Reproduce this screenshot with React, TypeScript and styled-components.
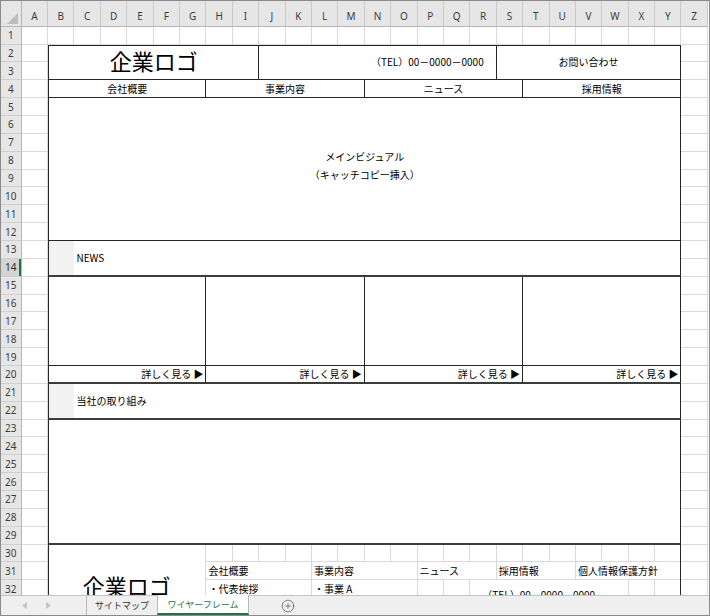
import React from 'react';
import styled, { createGlobalStyle } from 'styled-components';
import { CirclePlus } from 'lucide-react';

const COLW = 26.4;
const ROWH = 17.86;
const COLS = 'ABCDEFGHIJKLMNOPQRSTUVWXYZ'.split('');
const ROW_COUNT = 33;
const ACTIVE_ROW = 14;

const GlobalStyle = createGlobalStyle`
  html, body { margin: 0; padding: 0; background: #fff; }
  body { font-family: "Noto Sans CJK JP", "Noto Sans", sans-serif; }
  * { box-sizing: border-box; }
`;

const Window = styled.div`
  width: 710px;
  height: 616px;
  border: 1px solid #8a8a8a;
  display: flex;
  flex-direction: column;
  overflow: hidden;
  background: #fff;
`;

const Viewport = styled.div`
  flex: 1;
  min-height: 0;
  overflow: hidden;
  display: grid;
`;

const Layer = styled.div`
  grid-area: 1 / 1;
  display: grid;
  grid-template-columns: 20.7px repeat(26, ${COLW}px);
  grid-template-rows: 25.7px repeat(${ROW_COUNT}, ${ROWH}px);
  align-self: start;
`;

const ContentLayer = styled(Layer)`
  pointer-events: none;
`;

const Corner = styled.div`
  background: #e6e6e6;
  border-right: 1px solid #b4b4b4;
  border-bottom: 1px solid #b4b4b4;
  display: flex;
  align-items: flex-end;
  justify-content: flex-end;
  padding: 0 3px 2px 0;
`;

const ColHeader = styled.div`
  background: #e6e6e6;
  border-right: 1px solid #cacaca;
  border-bottom: 1px solid #b4b4b4;
  display: flex;
  align-items: center;
  justify-content: center;
  padding-top: 5px;
  font-family: "Noto Sans", "DejaVu Sans", sans-serif;
  font-size: 10px;
  color: #3c3c3c;
`;

const RowHeader = styled.div<{ $active?: boolean }>`
  background: ${(p) => (p.$active ? '#d4d4d4' : '#e6e6e6')};
  border-right: 1px solid #b4b4b4;
  border-bottom: 1px solid #cfcfcf;
  box-shadow: ${(p) => (p.$active ? 'inset -2px 0 0 #217346' : 'none')};
  display: flex;
  align-items: center;
  justify-content: center;
  font-family: "Noto Sans", "DejaVu Sans", sans-serif;
  font-size: 10px;
  color: ${(p) => (p.$active ? '#2b2b2b' : '#3c3c3c')};
`;

const GridCell = styled.div`
  border-right: 1px solid #d9d9d9;
  border-bottom: 1px solid #d9d9d9;
`;

type Edge = 0 | 1 | 2 | 'g';
const edge = (e: Edge = 0) =>
  e === 'g' ? '1px solid #d9d9d9' : e === 0 ? 'none' : `${e}px solid ${e === 2 ? '#3c3c3c' : '#262626'}`;

const cols = (a: string, b: string) => `${COLS.indexOf(a) + 2} / ${COLS.indexOf(b) + 3}`;
const rows = (a: number, b: number) => `${a + 1} / ${b + 2}`;

const Merged = styled.div<{
  $col: string;
  $row: string;
  $t?: Edge;
  $l?: Edge;
  $r?: Edge;
  $b?: Edge;
  $fill?: string;
  $justify?: string;
}>`
  grid-column: ${(p) => p.$col};
  grid-row: ${(p) => p.$row};
  background: ${(p) => p.$fill ?? '#fff'};
  border-top: ${(p) => edge(p.$t)};
  border-left: ${(p) => edge(p.$l)};
  border-right: ${(p) => edge(p.$r)};
  border-bottom: ${(p) => edge(p.$b)};
  display: flex;
  align-items: center;
  justify-content: ${(p) => p.$justify ?? 'center'};
  min-width: 0;
  overflow: hidden;
  white-space: nowrap;
  font-size: 10px;
  line-height: 12px;
  color: #000;
`;

const LogoCell = styled(Merged)`
  font-size: 22px;
  line-height: 26px;
  padding-bottom: 5px;
`;

const TelCell = styled(Merged)`
  padding-right: 12px;
`;

const VisualCell = styled(Merged)`
  flex-direction: column;
  line-height: 18px;
  padding-bottom: 6px;
`;

const SectionLabel = styled(Merged)`
  padding-left: 2px;
`;

const MoreCell = styled(Merged)`
  padding-right: 2px;
`;

const FooterLogo = styled(Merged)`
  align-items: flex-start;
  font-size: 22px;
  line-height: 26px;
  padding-top: 27px;
`;

const FooterLink = styled(Merged)`
  padding-left: 2px;
`;

const FooterTel = styled(Merged)`
  align-items: flex-start;
  padding-left: 12px;
  padding-top: 9px;
`;

const Outline = styled(Merged)`
  background: transparent;
`;

const TabBar = styled.div`
  height: 20px;
  flex: none;
  display: flex;
  background: #efefef;
  font-size: 9px;
`;

const NavArea = styled.div`
  width: 85px;
  border-top: 1px solid #c3c3c3;
  display: flex;
  align-items: center;
  padding-left: 21px;
  gap: 19px;
`;

const Tab = styled.div<{ $w: number }>`
  width: ${(p) => p.$w}px;
  border-top: 1px solid #c3c3c3;
  border-left: 1px solid #b9b9b9;
  display: flex;
  align-items: center;
  justify-content: center;
  color: #333;
`;

const ActiveTab = styled.div<{ $w: number }>`
  width: ${(p) => p.$w}px;
  background: #fff;
  border-left: 1px solid #b9b9b9;
  border-right: 1px solid #b9b9b9;
  border-bottom: 2px solid #217346;
  display: flex;
  align-items: center;
  justify-content: center;
  padding-top: 1px;
  color: #217346;
`;

const AddArea = styled.div`
  flex: 1;
  border-top: 1px solid #c3c3c3;
  display: flex;
  align-items: center;
  padding-left: 32px;
  color: #6e6e6e;
`;

const navItems: [string, string, string][] = [
  ['会社概要', 'B', 'G'],
  ['事業内容', 'H', 'M'],
  ['ニュース', 'N', 'S'],
  ['採用情報', 'T', 'Y'],
];

const Arrow = ({ dir }: { dir: 'l' | 'r' }) => (
  <svg width="5" height="7" viewBox="0 0 5 7">
    <polygon points={dir === 'l' ? '5,0 0,3.5 5,7' : '0,0 5,3.5 0,7'} fill="#c4c4c4" />
  </svg>
);

export default function App() {
  const rowNums = Array.from({ length: ROW_COUNT }, (_, i) => i + 1);
  return (
    <>
      <GlobalStyle />
      <Window>
        <Viewport>
          <Layer>
            <Corner>
              <svg width="11" height="11" viewBox="0 0 11 11">
                <polygon points="11,0 11,11 0,11" fill="#bdbdbd" />
              </svg>
            </Corner>
            {COLS.map((c) => (
              <ColHeader key={c}>{c}</ColHeader>
            ))}
            {rowNums.map((r) => (
              <React.Fragment key={r}>
                <RowHeader $active={r === ACTIVE_ROW}>{r}</RowHeader>
                {COLS.map((c) => (
                  <GridCell key={c} />
                ))}
              </React.Fragment>
            ))}
          </Layer>

          <ContentLayer>
            {/* header */}
            <LogoCell $col={cols('B', 'I')} $row={rows(2, 3)} $t={1} $l={1} $r={1} $b={1}>
              企業ロゴ
            </LogoCell>
            <TelCell $col={cols('J', 'R')} $row={rows(2, 3)} $t={1} $r={1} $b={1} $justify="flex-end">
              （TEL）00－0000－0000
            </TelCell>
            <Merged $col={cols('S', 'Y')} $row={rows(2, 3)} $t={1} $r={1} $b={1}>
              お問い合わせ
            </Merged>
            {navItems.map(([label, a, b], i) => (
              <Merged key={label} $col={cols(a, b)} $row={rows(4, 4)} $l={i === 0 ? 1 : 0} $r={1} $b={1}>
                {label}
              </Merged>
            ))}

            {/* main visual */}
            <VisualCell $col={cols('B', 'Y')} $row={rows(5, 12)} $l={1} $r={1} $b={1}>
              <span>メインビジュアル</span>
              <span>（キャッチコピー挿入）</span>
            </VisualCell>

            {/* news */}
            <Merged $col={cols('B', 'B')} $row={rows(13, 14)} $l={1} $b={2} $fill="#f2f2f2" />
            <SectionLabel $col={cols('C', 'Y')} $row={rows(13, 14)} $r={1} $b={2} $justify="flex-start">
              NEWS
            </SectionLabel>
            {navItems.map(([label, a, b], i) => (
              <Merged key={'n' + label} $col={cols(a, b)} $row={rows(15, 19)} $l={i === 0 ? 1 : 0} $r={1} $b={1} />
            ))}
            {navItems.map(([label, a, b], i) => (
              <MoreCell
                key={'m' + label}
                $col={cols(a, b)}
                $row={rows(20, 20)}
                $l={i === 0 ? 1 : 0}
                $r={1}
                $b={2}
                $justify="flex-end"
              >
                詳しく見る ▶
              </MoreCell>
            ))}

            {/* initiatives */}
            <Merged $col={cols('B', 'B')} $row={rows(21, 22)} $l={1} $b={2} $fill="#f2f2f2" />
            <SectionLabel $col={cols('C', 'Y')} $row={rows(21, 22)} $r={1} $b={2} $justify="flex-start">
              当社の取り組み
            </SectionLabel>
            <Merged $col={cols('B', 'Y')} $row={rows(23, 29)} $l={1} $r={1} $b={2} />

            {/* footer */}
            <FooterLogo $col={cols('B', 'G')} $row={rows(30, 33)} $r="g">
              企業ロゴ
            </FooterLogo>
            <FooterLink $col={cols('H', 'K')} $row={rows(31, 31)} $r="g" $b="g" $justify="flex-start">
              会社概要
            </FooterLink>
            <FooterLink $col={cols('L', 'O')} $row={rows(31, 31)} $r="g" $b="g" $justify="flex-start">
              事業内容
            </FooterLink>
            <FooterLink $col={cols('P', 'R')} $row={rows(31, 31)} $r="g" $b="g" $justify="flex-start">
              ニュース
            </FooterLink>
            <FooterLink $col={cols('S', 'U')} $row={rows(31, 31)} $r="g" $b="g" $justify="flex-start">
              採用情報
            </FooterLink>
            <FooterLink $col={cols('V', 'Y')} $row={rows(31, 31)} $r="g" $b="g" $justify="flex-start">
              個人情報保護方針
            </FooterLink>
            <FooterLink $col={cols('H', 'K')} $row={rows(32, 32)} $r="g" $b="g" $justify="flex-start">
              ・代表挨拶
            </FooterLink>
            <FooterLink $col={cols('L', 'O')} $row={rows(32, 32)} $r="g" $b="g" $justify="flex-start">
              ・事業 A
            </FooterLink>
            <FooterTel $col={cols('R', 'W')} $row={rows(32, 33)} $r="g" $b="g" $justify="flex-start">
              （TEL）00－0000－0000
            </FooterTel>
            <Outline $col={cols('B', 'Y')} $row={rows(30, 33)} $l={1} $r={1} />
          </ContentLayer>
        </Viewport>

        <TabBar>
          <NavArea>
            <Arrow dir="l" />
            <Arrow dir="r" />
          </NavArea>
          <Tab $w={71}>サイトマップ</Tab>
          <ActiveTab $w={92}>ワイヤーフレーム</ActiveTab>
          <AddArea>
            <CirclePlus size={14} strokeWidth={1.5} />
          </AddArea>
        </TabBar>
      </Window>
    </>
  );
}
